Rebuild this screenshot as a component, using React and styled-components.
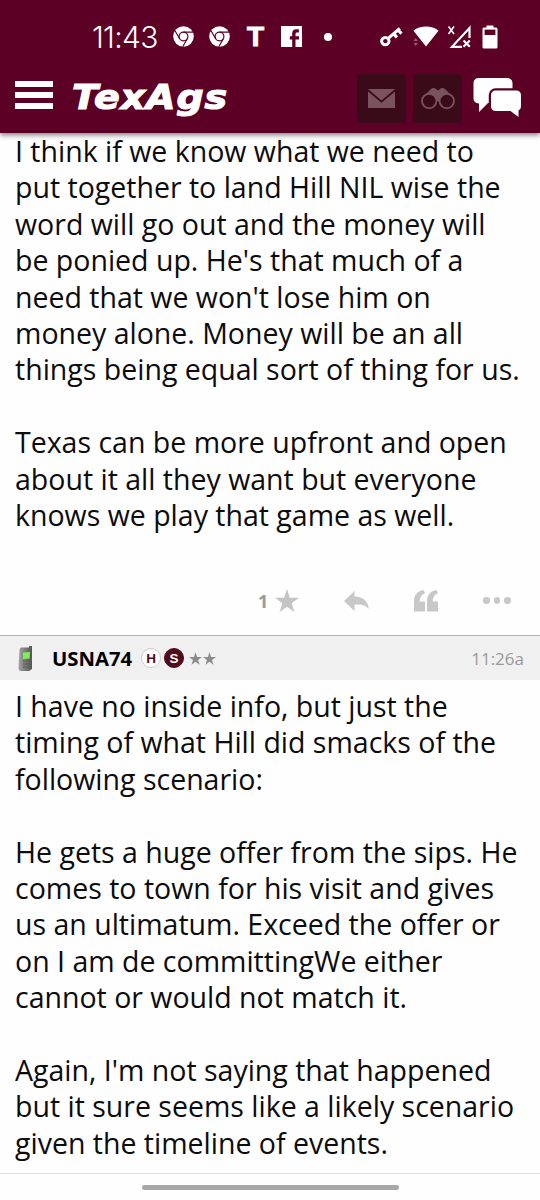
import React from 'react';
import styled, { createGlobalStyle } from 'styled-components';

const posts = {
  first: `I think if we know what we need to
put together to land Hill NIL wise the
word will go out and the money will
be ponied up. He's that much of a
need that we won't lose him on
money alone. Money will be an all
things being equal sort of thing for us.

Texas can be more upfront and open
about it all they want but everyone
knows we play that game as well.`,
  second: `I have no inside info, but just the
timing of what Hill did smacks of the
following scenario:

He gets a huge offer from the sips. He
comes to town for his visit and gives
us an ultimatum. Exceed the offer or
on I am de committingWe either
cannot or would not match it.

Again, I'm not saying that happened
but it sure seems like a likely scenario
given the timeline of events.`,
};

const STAR = 'M12 0l2.9 8.7H24l-7.4 5.5 2.8 8.9L12 17.7l-7.4 5.4 2.8-8.9L0 8.7h9.1z';

const Chrome = () => (
  <svg width="21" height="21" viewBox="0 0 21 21">
    <circle cx="10.5" cy="10.5" r="10.3" fill="#fff" />
    <g fill="none" stroke="#5c0025" strokeWidth="1.2">
      <circle cx="10.5" cy="10.5" r="4.4" />
      <path d="M10.5 6.1H20M6.7 12.7L2 4.7M14.3 12.7l-4.6 8" />
    </g>
    <circle cx="10.5" cy="10.5" r="3" fill="#fff" />
  </svg>
);

const Key = () => (
  <svg width="23" height="21" viewBox="0 0 23 21">
    <circle cx="5.3" cy="15.1" r="3.7" fill="none" stroke="#fff" strokeWidth="3" />
    <path d="M8.2 12.4L19.8 2.4M13.8 7.8l3.1 3.6M18 4l3.5 3.7" fill="none" stroke="#fff" strokeWidth="3.2" />
  </svg>
);

const Wifi = () => (
  <svg width="28" height="23" viewBox="0 0 28 23">
    <path d="M1.5 5.7C8 .1 20 .1 26.5 5.7L14 21.5z" fill="#fff" />
    <path d="M1.5 16l2.2-3 2.2 3zM1.5 18l2.2 3 2.2-3z" fill="#9c5872" />
  </svg>
);

const Signal = () => (
  <svg width="24" height="24" viewBox="0 0 24 24" fill="none" stroke="#fff">
    <path d="M20.5 13V3L3 21.8h10" strokeWidth="2.2" />
    <path d="M-.5 1.5L5 9M5 1.500L-.5 9" strokeWidth="1.6" />
    <path d="M14.5 15.5l6.3 6.3M20.8 15.500l-6.3 6.3" strokeWidth="2.2" />
  </svg>
);

const Battery = () => (
  <svg width="16" height="24" viewBox="0 0 16 24">
    <path d="M4.5.5h7v2H14A1.5 1.5 0 0 1 15.500 4v18a1.500 1.500 0 0 1-1.500 1.500H2A1.500 1.500 0 0 1 .5 22V4A1.500 1.500 0 0 1 2 2.500h2.500z" fill="#fff" />
    <path d="M2.6 4.6h10.8V10H2.6z" fill="#5c0025" />
  </svg>
);

const Facebook = () => (
  <svg width="21" height="21" viewBox="0 0 21 21">
    <path d="M.5 0h20a.5.5 0 0 1 .5.5v20a.5.5 0 0 1-.5.5h-6v-7.500h3.500v-3.200h-3.500V8.200c0-1.200.5-1.700 1.700-1.700h1.700V3.300h-2.700c-2.700 0-4 1.700-4 4.200v2.800H8.800v3.200h2.400V21H.5a.5.5 0 0 1-.5-.5V.5A.5.5 0 0 1 .5 0z" fill="#fff" />
  </svg>
);

const Envelope = () => (
  <svg width="27" height="19" viewBox="0 0 27 19" fill="#7b535e">
    <path d="M0 0h27L13.500 11.500z" />
    <path d="M0 2.500l13.500 11.300L27 2.500V19H0z" />
  </svg>
);

const Binoculars = () => (
  <svg width="34" height="22" viewBox="0 0 34 22">
    <path d="M3 8L10 1q3-2 5.500.5l1.500.7 1.500-.7Q21 -1 24 1L31 8l-12.500 4-1.500 2-1.500-2z" fill="#7b535e" />
    <g fill="#3b0a19" stroke="#7b535e" strokeWidth="1.8">
      <circle cx="8.2" cy="13" r="7.2" />
      <circle cx="25.8" cy="13" r="7.2" />
    </g>
  </svg>
);

const Chats = () => (
  <svg width="49" height="40" viewBox="0 0 49 40">
    <path d="M5.500 0h29a5 5 0 0 1 5 5v15a5 5 0 0 1-5 5H15L6 34V25.500h-.5a5 5 0 0 1-5-5V5a5 5 0 0 1 5-5z" fill="#fff" />
    <path d="M22.500 12.500h21A4.500 4.500 0 0 1 48 17v11a4.500 4.500 0 0 1-2.500 4.500V39l-8-6h-15a4.500 4.500 0 0 1-4.500-4.500V17a4.500 4.500 0 0 1 4.500-4.500z" fill="#fff" stroke="#5c0025" strokeWidth="4.5" paintOrder="stroke" />
  </svg>
);

const Reply = () => (
  <svg width="25" height="20" viewBox="0 0 25 20">
    <path d="M0 10L10.500 0v5.600C19 5.800 24.500 10.500 24.700 18c-3.200-4-7.700-5-14.200-4.300V20z" fill="#c8c8c8" />
  </svg>
);

const Quote = () => (
  <svg width="24" height="22" viewBox="0 0 24 22" fill="#c8c8c8">
    <path d="M0 21.500V11C0 5 3.500 1 9.500 0l1.500 3C7.500 4.500 5.700 7.500 5.600 11.500H11v10z" />
    <path d="M13 21.500V11C13 5 16.500 1 22.500 0L24 3c-3.500 1.500-5.300 4.500-5.400 8.500H24v10z" />
  </svg>
);

const Phone = () => (
  <svg width="16" height="25" viewBox="0 0 16 25">
    <defs>
      <linearGradient id="phoneBody">
        <stop offset="0" stopColor="#a5a5a5" />
        <stop offset=".4" stopColor="#828282" />
        <stop offset="1" stopColor="#555" />
      </linearGradient>
    </defs>
    <path d="M3 1.500h8V0h3v23l-3 2H3q-2.500 0-2.500-3l1-18q0-2.500 1.500-2.500z" fill="url(#phoneBody)" />
    <path d="M5 6.500l7-.5-.5 6.500-6.500.5z" fill="#7cef55" />
    <path d="M5 15h7M5 18h7M5 21h6" stroke="#555" strokeDasharray="1.8 .7" />
  </svg>
);

const App = () => (
  <Screen>
    <GlobalStyle />
    <Header>
      <StatusBar>
        <Notifications>
          <Clock>11:43</Clock>
          <Chrome />
          <Chrome />
          <AppLetter>T</AppLetter>
          <Facebook />
          <MoreDot $size={8} $color="#fff" />
        </Notifications>
        <SystemIcons>
          <Key />
          <Wifi />
          <Signal />
          <Battery />
        </SystemIcons>
      </StatusBar>
      <NavBar>
        <MenuButton aria-label="Menu">
          <span />
          <span />
          <span />
        </MenuButton>
        <Logo viewBox="0 0 170 50">
          <text y="31" transform="scale(1.1 1)" textLength="141">
            TexAgs
          </text>
        </Logo>
        <NavActions>
          <NavButton aria-label="Messages">
            <Envelope />
          </NavButton>
          <NavButton aria-label="Watched">
            <Binoculars />
          </NavButton>
          <Chats />
        </NavActions>
      </NavBar>
    </Header>

    <Message>{posts.first}</Message>
    <PostActions>
      <StarCount>
        1
        <svg width="24" height="23" viewBox="0 0 24 23">
          <path d={STAR} fill="#c4c4c4" />
        </svg>
      </StarCount>
      <Reply />
      <Quote />
      <More>
        <Dot $size={6.5} $color="#c8c8c8" />
        <Dot $size={6.5} $color="#c8c8c8" />
        <Dot $size={6.5} $color="#c8c8c8" />
      </More>
    </PostActions>

    <PostHeader>
      <Phone />
      <UserName>USNA74</UserName>
      <Badge>H</Badge>
      <Badge $filled>S</Badge>
      <Stars>
        <svg width="13" height="13" viewBox="0 0 24 23">
          <path d={STAR} fill="#8c8c8c" />
        </svg>
        <svg width="13" height="13" viewBox="0 0 24 23">
          <path d={STAR} fill="#8c8c8c" />
        </svg>
      </Stars>
      <Time>11:26a</Time>
    </PostHeader>
    <Message $second>{posts.second}</Message>
    <Footer>
      <HomeBar />
    </Footer>
  </Screen>
);

const GlobalStyle = createGlobalStyle`
  * {
    box-sizing: border-box;
  }

  body {
    margin: 0;
    background-color: #fefefe;
  }

  svg {
    display: block;
    flex-shrink: 0;
    overflow: visible;
  }
`;

const Screen = styled.div`
  display: flex;
  flex-direction: column;
  width: 540px;
  height: 1200px;
  overflow: hidden;
  color: #0c0c0c;
  font-family: 'Open Sans', 'Noto Sans', sans-serif;
`;

const Header = styled.header`
  flex-shrink: 0;
  height: 133px;
  background-color: #5c0025;
  box-shadow: 0 2px 5px rgba(0, 0, 0, 0.5);
`;

const StatusBar = styled.div`
  display: flex;
  justify-content: space-between;
  height: 73px;
  padding: 0 42px 0 92px;
`;

const Notifications = styled.div`
  display: flex;
  align-items: center;
  gap: 15px;
`;

const Clock = styled.time`
  width: 66px;
  color: #fff;
  font-family: Inter, Roboto, sans-serif;
  font-size: 30px;
  font-weight: 300;
  letter-spacing: -0.7px;
  white-space: nowrap;
`;

const AppLetter = styled.span`
  width: 21px;
  color: #fff;
  font-family: 'Liberation Sans', sans-serif;
  font-size: 28px;
  font-weight: 700;
  line-height: 1;
  text-align: center;
  -webkit-text-stroke: 1px #fff;
`;

const Dot = styled.i`
  width: ${props => props.$size}px;
  height: ${props => props.$size}px;
  border-radius: 50%;
  background-color: ${props => props.$color};
`;

const MoreDot = styled(Dot)`
  margin-left: 7px;
`;

const SystemIcons = styled.div`
  display: flex;
  align-items: center;
  gap: 9px;
`;

const NavBar = styled.div`
  display: flex;
  align-items: flex-start;
  height: 60px;
  padding: 1px 18px 0 15px;
`;

const MenuButton = styled.button`
  display: flex;
  flex-direction: column;
  justify-content: space-between;
  width: 38px;
  height: 28px;
  margin-top: 7px;
  padding: 0;
  border: 0;
  background: none;

  span {
    height: 6px;
    background-color: #fff;
  }
`;

const Logo = styled.svg`
  width: 170px;
  height: 50px;
  margin: 4px 0 0 19px;

  text {
    fill: #fff;
    stroke: #fff;
    stroke-width: 1.2px;
    font-family: 'DejaVu Sans', sans-serif;
    font-size: 34.5px;
    font-style: italic;
    font-weight: 700;
  }
`;

const NavActions = styled.div`
  display: flex;
  gap: 7px;
  margin-left: auto;

  > svg {
    margin: 4px 0 0 4px;
  }
`;

const NavButton = styled.button`
  display: flex;
  align-items: center;
  justify-content: center;
  width: 49px;
  height: 49px;
  padding: 0;
  border: 0;
  border-radius: 4px;
  background-color: #3b0a19;
`;

const Message = styled.p`
  flex-shrink: 0;
  margin: 0;
  height: ${props => (props.$second ? 493 : 433)}px;
  padding: ${props => (props.$second ? 8 : 0)}px 0 0 15px;
  font-size: 28.5px;
  line-height: 36.4px;
  white-space: pre;
`;

const PostActions = styled.div`
  display: flex;
  align-items: center;
  justify-content: space-between;
  height: 69px;
  padding: 0 29px 0 258px;
`;

const StarCount = styled.span`
  display: flex;
  align-items: center;
  gap: 7px;
  color: #999;
  font-size: 18px;
  font-weight: 700;
`;

const More = styled.div`
  display: flex;
  gap: 4px;
`;

const PostHeader = styled.div`
  display: flex;
  flex-shrink: 0;
  align-items: center;
  height: 45px;
  padding: 0 16px 0 18px;
  border-top: 1px solid #b0b0b0;
  background-color: #f0f0f0;
`;

const UserName = styled.strong`
  width: 89px;
  margin-left: 18px;
  color: #000;
  font-size: 20.3px;
`;

const Badge = styled.span`
  display: flex;
  align-items: center;
  justify-content: center;
  width: 20px;
  height: 20px;
  margin-right: 3px;
  border: 1px solid ${props => (props.$filled ? '#500b1c' : '#ccc')};
  border-radius: 50%;
  color: ${props => (props.$filled ? '#fff' : '#500b1c')};
  background-color: ${props => (props.$filled ? '#500b1c' : '#fff')};
  font-family: 'Liberation Sans', sans-serif;
  font-size: 13.5px;
  font-weight: 700;
`;

const Stars = styled.span`
  display: flex;
  gap: 1px;
  margin-left: 2px;
`;

const Time = styled.time`
  margin-left: auto;
  color: #999;
  font-size: 17px;
`;

const Footer = styled.footer`
  display: flex;
  flex: 1;
  justify-content: center;
  padding-top: 11px;
  border-top: 1px solid #ddd;
`;

const HomeBar = styled.div`
  width: 257px;
  height: 5px;
  border-radius: 3px;
  background-color: #a7a7a7;
`;

export default App;
